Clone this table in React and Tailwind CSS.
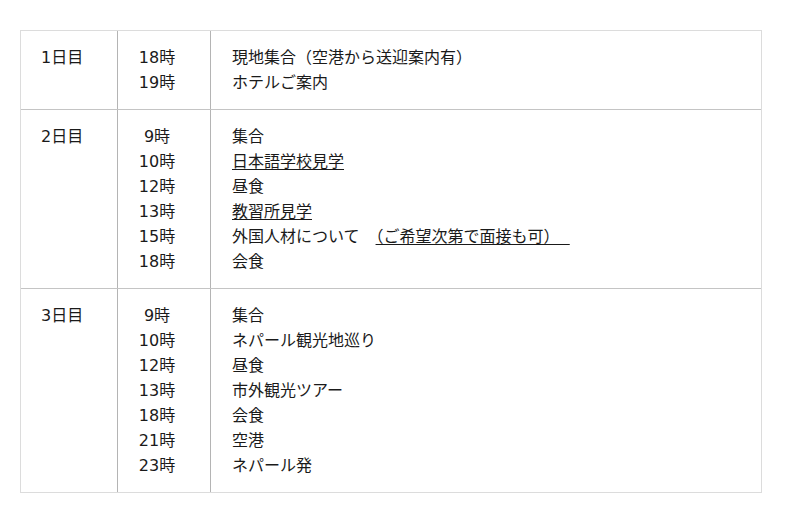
import React from 'react';

const days = [
  {
    label: '1日目',
    items: [
      { time: '18時', text: '現地集合（空港から送迎案内有）' },
      { time: '19時', text: 'ホテルご案内' },
    ],
  },
  {
    label: '2日目',
    items: [
      { time: '9時', text: '集合' },
      { time: '10時', text: '日本語学校見学', u: true },
      { time: '12時', text: '昼食' },
      { time: '13時', text: '教習所見学', u: true },
      { time: '15時', text: '外国人材について', note: '（ご希望次第で面接も可）  ' },
      { time: '18時', text: '会食' },
    ],
  },
  {
    label: '3日目',
    items: [
      { time: '9時', text: '集合' },
      { time: '10時', text: 'ネパール観光地巡り' },
      { time: '12時', text: '昼食' },
      { time: '13時', text: '市外観光ツアー' },
      { time: '18時', text: '会食' },
      { time: '21時', text: '空港' },
      { time: '23時', text: 'ネパール発' },
    ],
  },
];

const App = () => {
  return (
    <div
      className="min-h-screen bg-white text-[#1a1a1a] text-[16px] leading-[25px] pt-[30px] pl-[20px]"
      style={{ fontFamily: '"DejaVu Sans", "Noto Sans CJK JP", sans-serif' }}
    >
      <div className="w-[742px] border border-[#dcdcdc]">
        {days.map((day, i) => (
          <div key={day.label} className={`flex ${i > 0 ? 'border-t border-[#c4c4c4]' : ''}`}>
            {/* Day */}
            <div className="w-[96px] pl-[20px] py-[14px]">{day.label}</div>
            {/* Times */}
            <div className="w-[93px] border-l border-[#b4b4b4] pl-[20px] pr-[34px] py-[14px] text-center">
              {day.items.map((it) => (
                <div key={it.time}>{it.time}</div>
              ))}
            </div>
            {/* Schedule */}
            <div className="flex-1 border-l border-[#b4b4b4] pl-[21px] py-[14px]">
              {day.items.map((it) => (
                <div key={it.time} className="whitespace-pre">
                  <span className={it.u ? 'underline underline-offset-2' : ''}>{it.text}</span>
                  {it.note && (
                    <>
                      <span>　</span>
                      <span className="underline underline-offset-2">{it.note}</span>
                    </>
                  )}
                </div>
              ))}
            </div>
          </div>
        ))}
      </div>
    </div>
  );
};

export default App;
